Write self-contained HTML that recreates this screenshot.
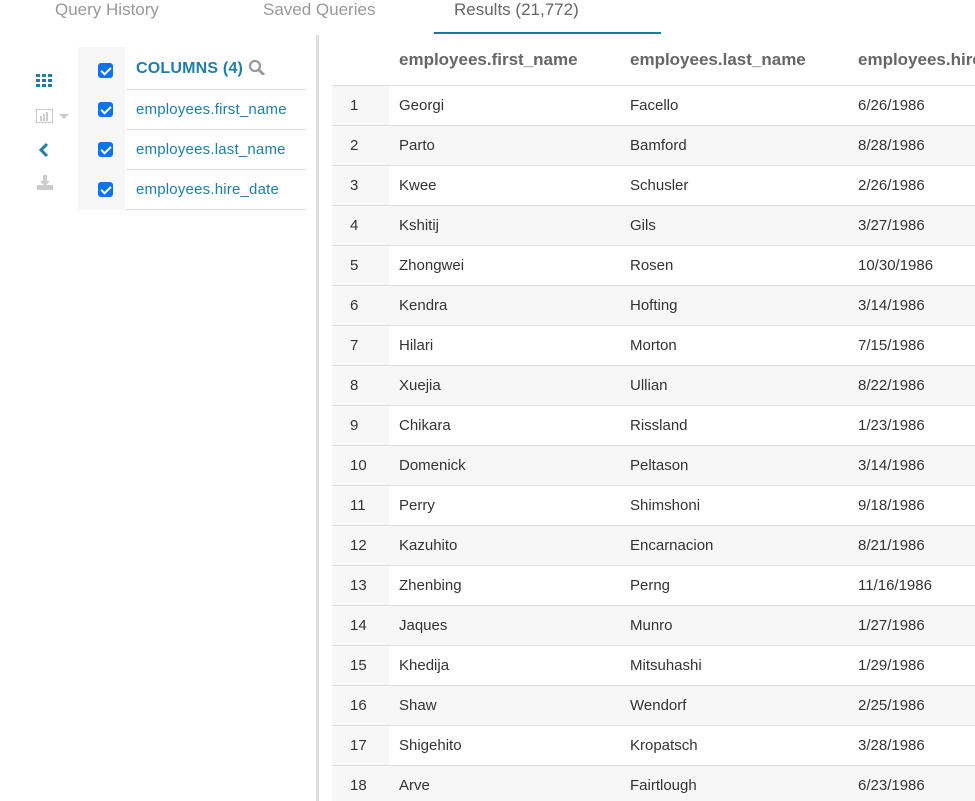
<!DOCTYPE html>
<html><head><style>
*{margin:0;padding:0;box-sizing:border-box}
html,body{width:975px;height:801px;overflow:hidden}
body{background:#fff;font-family:"Liberation Sans",sans-serif;position:relative;color:#333}
.tab{position:absolute;top:0;font-size:17px;color:#999;line-height:20px}
.ul{position:absolute;left:434px;top:32px;width:227px;height:2px;background:#0b7fab}
.vdiv{position:absolute;left:316px;top:35px;width:3px;height:766px;background:#ddd}
.cp{position:absolute;left:78px;top:47px;width:228px}
.cb{position:absolute;left:0;top:0;width:47px;height:163px;background:#f7f7f7}
.crow{position:relative;height:40px;border-bottom:1px solid #ddd;margin-left:48px}
.chk{position:absolute;left:-28px;top:12px;width:15px;height:15px;background:#0a74e8;border-radius:3px}
.chk:after{content:"";position:absolute;left:5px;top:2px;width:4px;height:8px;border:solid #fff;border-width:0 2px 2px 0;transform:rotate(45deg)}
.crow span{position:absolute;left:10px;top:11px;font-size:15px;color:#1f7ea6;letter-spacing:.2px}
.tw{position:absolute;left:332px;top:35px;width:643px;height:766px;overflow:hidden}
table{border-collapse:collapse;font-size:15px;width:700px}
th{height:50px;text-align:left;font-weight:bold;color:#666;font-size:17px;padding-left:10px;border-bottom:1px solid #ddd;white-space:nowrap}
td{height:40px;border-bottom:1px solid #ddd;padding-left:10px;color:#333}
td:first-child{background:#f7f7f7;padding-left:18px;width:57px}
tr:nth-child(odd) td{background:#f7f7f7}
</style></head><body>
<div class="tab" style="left:55px">Query History</div>
<div class="tab" style="left:263px">Saved Queries</div>
<div class="tab" style="left:454px;color:#666">Results (21,772)</div>
<div class="ul"></div>
<svg style="position:absolute;left:36px;top:74px" width="18" height="14"><g fill="#1f7ea6"><rect x="0" y="0" width="4" height="3"/><rect x="6" y="0" width="4" height="3"/><rect x="12" y="0" width="4" height="3"/><rect x="0" y="5" width="4" height="3"/><rect x="6" y="5" width="4" height="3"/><rect x="12" y="5" width="4" height="3"/><rect x="0" y="10" width="4" height="3"/><rect x="6" y="10" width="4" height="3"/><rect x="12" y="10" width="4" height="3"/></g></svg>
<svg style="position:absolute;left:36px;top:108px" width="34" height="16"><rect x="0.5" y="1.5" width="16" height="13" fill="none" stroke="#ccc"/><g fill="#ccc"><rect x="4" y="8" width="2" height="5"/><rect x="7" y="6" width="2" height="7"/><rect x="10" y="4" width="2" height="9"/></g><path d="M23 6h10l-5 5z" fill="#ccc"/></svg>
<svg style="position:absolute;left:38px;top:142px" width="12" height="16"><path d="M9 2L3 8l6 6" fill="none" stroke="#1f7ea6" stroke-width="3"/></svg>
<svg style="position:absolute;left:36px;top:174px" width="18" height="16"><path d="M7 1h4v6h3l-5 5-5-5h3z" fill="#ccc"/><rect x="1" y="11" width="16" height="5" fill="#ccc"/></svg>
<div class="cp"><div class="cb"></div>
<div class="crow" style="height:43px"><div class="chk" style="top:16px"></div><span style="top:12px;font-weight:bold;font-size:16px">COLUMNS (4) <svg width="18" height="16" style="vertical-align:-2px"><circle cx="7" cy="7" r="5" fill="none" stroke="#999" stroke-width="2.2"/><path d="M11 11l5 5" stroke="#999" stroke-width="3"/></svg></span></div>
<div class="crow"><div class="chk"></div><span>employees.first_name</span></div>
<div class="crow"><div class="chk"></div><span>employees.last_name</span></div>
<div class="crow"><div class="chk"></div><span>employees.hire_date</span></div>
</div>
<div class="vdiv"></div>
<div class="tw">
<table>
<tr><th style="width:57px"></th><th style="width:231px;padding-left:10px">employees.first_name</th><th style="width:228px">employees.last_name</th><th>employees.hire_date</th></tr>
<tr><td>1</td><td>Georgi</td><td>Facello</td><td>6/26/1986</td></tr>
<tr><td>2</td><td>Parto</td><td>Bamford</td><td>8/28/1986</td></tr>
<tr><td>3</td><td>Kwee</td><td>Schusler</td><td>2/26/1986</td></tr>
<tr><td>4</td><td>Kshitij</td><td>Gils</td><td>3/27/1986</td></tr>
<tr><td>5</td><td>Zhongwei</td><td>Rosen</td><td>10/30/1986</td></tr>
<tr><td>6</td><td>Kendra</td><td>Hofting</td><td>3/14/1986</td></tr>
<tr><td>7</td><td>Hilari</td><td>Morton</td><td>7/15/1986</td></tr>
<tr><td>8</td><td>Xuejia</td><td>Ullian</td><td>8/22/1986</td></tr>
<tr><td>9</td><td>Chikara</td><td>Rissland</td><td>1/23/1986</td></tr>
<tr><td>10</td><td>Domenick</td><td>Peltason</td><td>3/14/1986</td></tr>
<tr><td>11</td><td>Perry</td><td>Shimshoni</td><td>9/18/1986</td></tr>
<tr><td>12</td><td>Kazuhito</td><td>Encarnacion</td><td>8/21/1986</td></tr>
<tr><td>13</td><td>Zhenbing</td><td>Perng</td><td>11/16/1986</td></tr>
<tr><td>14</td><td>Jaques</td><td>Munro</td><td>1/27/1986</td></tr>
<tr><td>15</td><td>Khedija</td><td>Mitsuhashi</td><td>1/29/1986</td></tr>
<tr><td>16</td><td>Shaw</td><td>Wendorf</td><td>2/25/1986</td></tr>
<tr><td>17</td><td>Shigehito</td><td>Kropatsch</td><td>3/28/1986</td></tr>
<tr><td>18</td><td>Arve</td><td>Fairtlough</td><td>6/23/1986</td></tr>
</table>
</div>
</body></html>
